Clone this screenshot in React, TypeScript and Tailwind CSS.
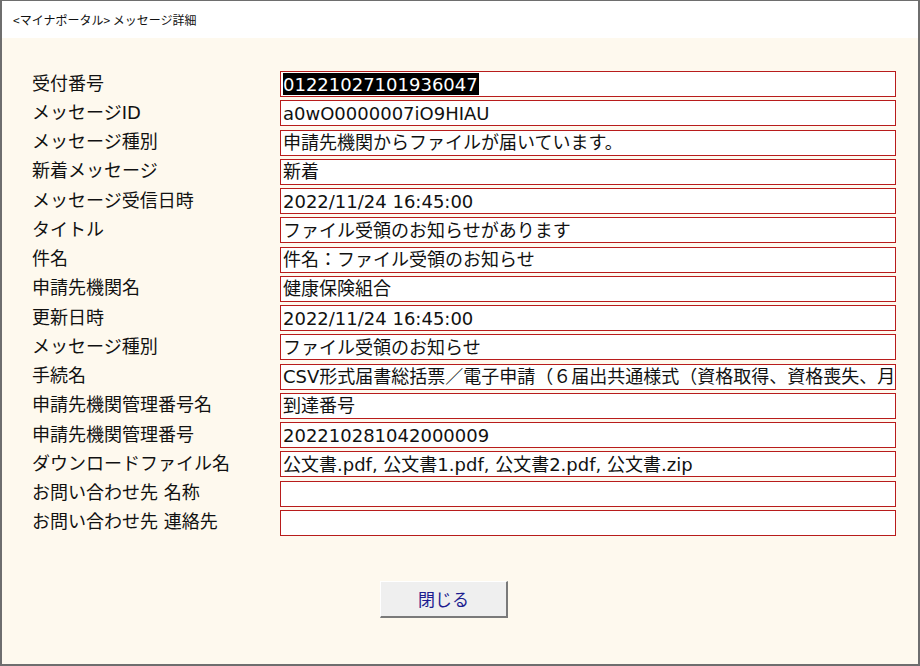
const rows: [string, string][] = [
  ['受付番号', '01221027101936047'],
  ['メッセージID', 'a0wO0000007iO9HIAU'],
  ['メッセージ種別', '申請先機関からファイルが届いています。'],
  ['新着メッセージ', '新着'],
  ['メッセージ受信日時', '2022/11/24 16:45:00'],
  ['タイトル', 'ファイル受領のお知らせがあります'],
  ['件名', '件名：ファイル受領のお知らせ'],
  ['申請先機関名', '健康保険組合'],
  ['更新日時', '2022/11/24 16:45:00'],
  ['メッセージ種別', 'ファイル受領のお知らせ'],
  ['手続名', 'CSV形式届書総括票／電子申請（６届出共通様式（資格取得、資格喪失、月額変更、賞与）'],
  ['申請先機関管理番号名', '到達番号'],
  ['申請先機関管理番号', '202210281042000009'],
  ['ダウンロードファイル名', '公文書.pdf, 公文書1.pdf, 公文書2.pdf, 公文書.zip'],
  ['お問い合わせ先 名称', ''],
  ['お問い合わせ先 連絡先', ''],
];

export default function App() {
  return (
    <div
      className="w-[920px] h-[666px] flex flex-col bg-[#fef9ee] border-l-2 border-r-2 border-b-2 border-t border-[#6e6e6e] text-[#111] overflow-hidden"
      style={{ fontFamily: '"DejaVu Sans", "Noto Sans CJK JP", sans-serif' }}
    >
      <div
        className="h-[37px] shrink-0 bg-white flex items-center pl-[11px] text-[12px] leading-none"
        style={{ fontFamily: '"Noto Sans CJK JP", "Noto Sans", sans-serif' }}
      >
        &lt;マイナポータル&gt; メッセージ詳細
      </div>

      <div className="flex flex-col gap-[3.27px] pt-[33px] pl-[30px]">
        {rows.map(([label, value], i) => (
          <div key={i} className="flex h-[26px]">
            <div className="w-[248px] shrink-0 flex items-center text-[18px] leading-none -mt-[1px]">
              {label}
            </div>
            <div className="w-[616px] min-w-0 shrink-0 h-[26px] border border-[#b81c1c] bg-white overflow-hidden">
              <div className="h-[24px] pl-[2px] pt-[1px] flex items-center whitespace-nowrap overflow-hidden text-[18px] leading-none">
                {i === 0 ? (
                  <span className="bg-black text-white h-[22px] -mt-[1px] flex items-center pt-[1px] pr-[1px]">{value}</span>
                ) : (
                  <span className="shrink-0">{value}</span>
                )}
              </div>
            </div>
          </div>
        ))}
      </div>

      <div className="flex pl-[378px] pt-[45px]">
        <button
          className="w-[128px] h-[37px] bg-[#efefef] border-t border-l border-white border-r-2 border-b-2 border-r-[#7a7a7a] border-b-[#7a7a7a] text-[#1d1d8f] text-[17px] leading-none"
          style={{ fontFamily: '"Noto Sans CJK JP", sans-serif' }}
        >
          閉じる
        </button>
      </div>
    </div>
  );
}
